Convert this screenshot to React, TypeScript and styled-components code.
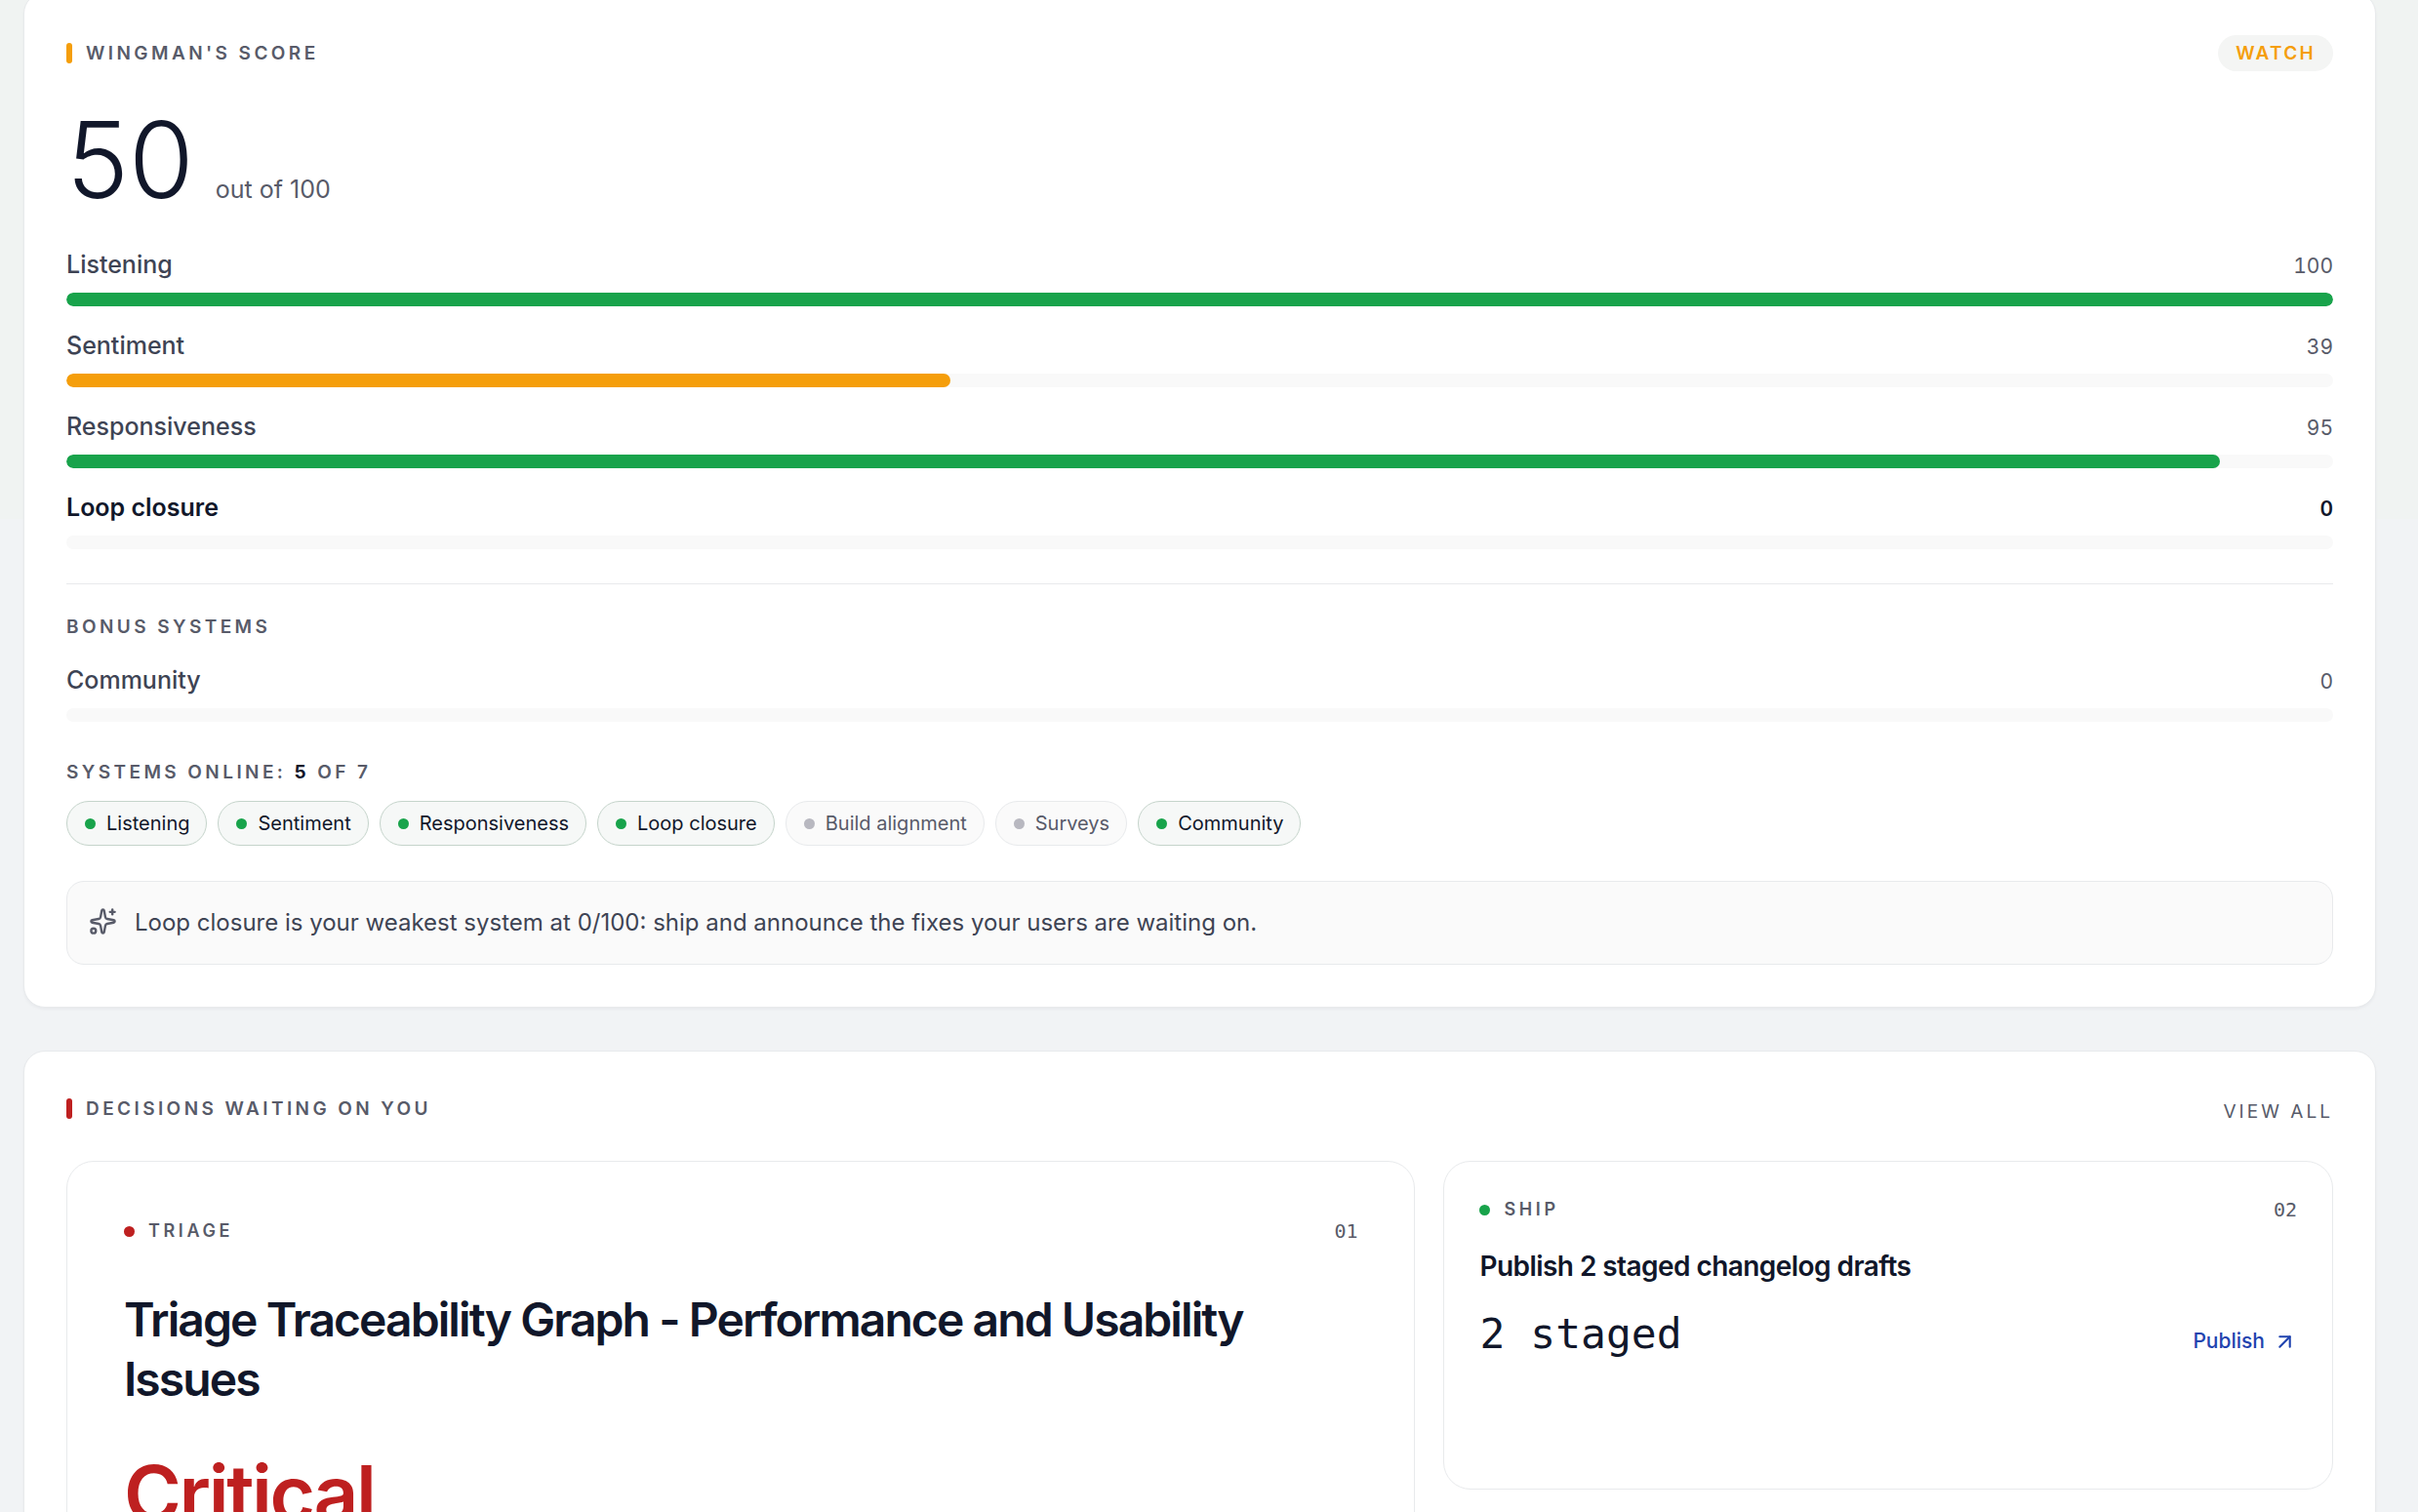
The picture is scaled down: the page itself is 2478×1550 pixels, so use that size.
import React from "react";
import styled, { createGlobalStyle } from "styled-components";
import { ArrowUpRight, Sparkles } from "lucide-react";

const color = {
  ink: "#11172a",
  body: "#3e4454",
  muted: "#585b69",
  line: "#e8eaec",
  good: "#18a34b",
  warn: "#f59e0b",
  bad: "#be2020",
  link: "#1f43af",
  off: "#b8b8c0",
};

const sans = `Inter, "Liberation Sans", sans-serif`;
const mono = `"DejaVu Sans Mono", "Liberation Mono", monospace`;

const GlobalStyle = createGlobalStyle`
  *, *::before, *::after { box-sizing: border-box; }
  body {
    margin: 0;
    background: #f1f3f5;
    font-family: ${sans};
    color: ${color.ink};
    -webkit-font-smoothing: antialiased;
  }
  h1, h2, h3, p, ul { margin: 0; padding: 0; }
`;

const Page = styled.main`
  display: flex;
  flex-direction: column;
  gap: 44px;
  height: 100vh;
  overflow: hidden;
  padding: 0 43px 0 24px;
  background: linear-gradient(#f0f3f2 0 532px, #f1f3f5 532px);
`;

const Card = styled.section<{ $scrolled?: boolean }>`
  flex: none;
  margin-top: ${(p) => (p.$scrolled ? "-8px" : "0")};
  padding: 43px;
  background: #fff;
  border: 1px solid ${color.line};
  border-radius: 22px;
  box-shadow: 0 2px 3px rgba(17, 23, 42, 0.04);
`;

const CardHeader = styled.header<{ $align: string }>`
  display: flex;
  justify-content: space-between;
  align-items: ${(p) => p.$align};
`;

const CardTitle = styled.h2<{ $accent: string }>`
  display: flex;
  align-items: center;
  gap: 14px;
  font-size: 19px;
  line-height: 31px;
  font-weight: 600;
  letter-spacing: 0.18em;
  text-transform: uppercase;
  color: ${color.muted};

  &::before {
    content: "";
    width: 6px;
    height: 21px;
    border-radius: 3px;
    background: ${(p) => p.$accent};
  }
`;

const Status = styled.span`
  padding: 0 18px;
  border-radius: 19px;
  background: #f4f5f4;
  color: ${color.warn};
  font-size: 19px;
  line-height: 37px;
  font-weight: 600;
  letter-spacing: 0.12em;
`;

const Score = styled.p`
  display: flex;
  align-items: baseline;
  gap: 22px;
  margin: 37px 0 35px;
  font-size: 25px;
  line-height: 36px;
  color: ${color.muted};
`;

const ScoreValue = styled.strong`
  font-size: 108px;
  line-height: 108px;
  font-weight: 300;
  color: ${color.ink};
`;

const Meters = styled.div`
  display: flex;
  flex-direction: column;
  gap: 22px;
`;

const MeterRow = styled.div<{ $strong?: boolean }>`
  display: grid;
  grid-template-columns: 1fr auto;
  align-items: baseline;
  row-gap: 11px;
  font-size: 25px;
  line-height: 36px;
  font-weight: ${(p) => (p.$strong ? 600 : 500)};
  color: ${(p) => (p.$strong ? color.ink : color.body)};
`;

const MeterValue = styled.span<{ $strong?: boolean }>`
  font-size: 21px;
  line-height: 30px;
  font-weight: ${(p) => (p.$strong ? 600 : 400)};
  font-variant-numeric: tabular-nums;
  color: ${(p) => (p.$strong ? color.ink : color.muted)};
`;

const Track = styled.div`
  grid-column: 1 / -1;
  height: 14px;
  border-radius: 7px;
  background: #f9f9f9;
  overflow: hidden;
`;

const Fill = styled.div<{ $tone: string }>`
  height: 100%;
  border-radius: 7px;
  background: ${(p) => p.$tone};
`;

const Divider = styled.hr`
  margin: 35px 0 30px;
  border: 0;
  border-top: 1px solid ${color.line};
`;

const Overline = styled.h3<{ $top?: number; $bottom: number }>`
  margin-top: ${(p) => p.$top ?? 0}px;
  margin-bottom: ${(p) => p.$bottom}px;
  font-size: 19px;
  line-height: 28px;
  font-weight: 600;
  letter-spacing: 0.18em;
  text-transform: uppercase;
  color: ${color.muted};

  b {
    font-weight: 700;
    color: ${color.ink};
  }
`;

const Chips = styled.ul`
  display: flex;
  flex-wrap: wrap;
  gap: 11px;
  list-style: none;
`;

const Dot = styled.span<{ $tone: string }>`
  flex: none;
  width: 11px;
  height: 11px;
  border-radius: 50%;
  background: ${(p) => p.$tone};
`;

const Chip = styled.li<{ $online: boolean }>`
  display: flex;
  align-items: center;
  gap: 11px;
  padding: 0 17px 0 18px;
  border: 1px solid ${(p) => (p.$online ? "#c5d4cb" : color.line)};
  border-radius: 23px;
  background: ${(p) => (p.$online ? "#f6f8f7" : "#fafafa")};
  font-size: 20px;
  line-height: 44px;
  color: ${(p) => (p.$online ? color.ink : color.muted)};
`;

const Insight = styled.p`
  display: flex;
  align-items: center;
  gap: 18px;
  margin-top: 36px;
  padding: 22px;
  border: 1px solid ${color.line};
  border-radius: 18px;
  background: #fafafa;
  font-size: 24px;
  line-height: 40px;
  color: ${color.body};

  svg {
    flex: none;
    margin-bottom: 4px;
    color: ${color.muted};
  }
`;

const ViewAll = styled.a`
  font-size: 19px;
  line-height: 38px;
  letter-spacing: 0.16em;
  text-transform: uppercase;
  text-decoration: none;
  color: ${color.muted};
`;

const Decisions = styled.div`
  display: grid;
  grid-template-columns: 91fr 60fr;
  align-items: start;
  gap: 29px;
  margin-top: 31px;
`;

const Decision = styled.article<{ $lead?: boolean }>`
  min-height: ${(p) => (p.$lead ? 600 : 337)}px;
  padding: ${(p) => (p.$lead ? 58 : 36)}px;
  border: 1px solid ${color.line};
  border-radius: 28px;
`;

const DecisionHeader = styled.header`
  display: flex;
  align-items: center;
  gap: 14px;
  font-size: 18px;
  line-height: 26px;
  font-weight: 600;
  letter-spacing: 0.2em;
  text-transform: uppercase;
  color: ${color.muted};
`;

const Index = styled.span`
  margin-left: auto;
  font-family: ${mono};
  font-size: 20px;
  font-weight: 400;
  letter-spacing: 0;
`;

const LeadTitle = styled.h3`
  margin-top: 47px;
  font-size: 48px;
  line-height: 61px;
  font-weight: 600;
  letter-spacing: -0.04em;
`;

const Severity = styled.p`
  margin-top: 47px;
  font-size: 80px;
  line-height: 80px;
  font-weight: 600;
  letter-spacing: -0.03em;
  color: ${color.bad};
`;

const SideTitle = styled.h3`
  margin-top: 26px;
  font-size: 28px;
  line-height: 38px;
  font-weight: 600;
  letter-spacing: -0.02em;
`;

const SideFooter = styled.div`
  display: flex;
  align-items: baseline;
  justify-content: space-between;
  margin-top: 21px;
`;

const Metric = styled.span`
  font-family: ${mono};
  font-size: 43px;
  line-height: 58px;
  color: ${color.ink};
`;

const Action = styled.a`
  display: flex;
  align-items: center;
  gap: 8px;
  font-size: 21px;
  line-height: 32px;
  font-weight: 500;
  text-decoration: none;
  color: ${color.link};
`;

type MeterProps = { label: string; value: number; tone?: string; strong?: boolean };

const Meter = ({ label, value, tone = color.good, strong }: MeterProps) => (
  <MeterRow $strong={strong}>
    <span>{label}</span>
    <MeterValue $strong={strong}>{value}</MeterValue>
    <Track role="meter" aria-label={label} aria-valuemin={0} aria-valuemax={100} aria-valuenow={value}>
      <Fill $tone={tone} style={{ width: `${value}%` }} />
    </Track>
  </MeterRow>
);

const systems = [
  { name: "Listening", online: true },
  { name: "Sentiment", online: true },
  { name: "Responsiveness", online: true },
  { name: "Loop closure", online: true },
  { name: "Build alignment", online: false },
  { name: "Surveys", online: false },
  { name: "Community", online: true },
];

export default function App() {
  return (
    <>
      <GlobalStyle />
      <Page>
        <Card $scrolled>
          <CardHeader $align="center">
            <CardTitle $accent={color.warn}>Wingman's score</CardTitle>
            <Status>WATCH</Status>
          </CardHeader>
          <Score>
            <ScoreValue>50</ScoreValue>
            <span>out of 100</span>
          </Score>
          <Meters>
            <Meter label="Listening" value={100} />
            <Meter label="Sentiment" value={39} tone={color.warn} />
            <Meter label="Responsiveness" value={95} />
            <Meter label="Loop closure" value={0} strong />
          </Meters>
          <Divider />
          <Overline $bottom={22}>Bonus systems</Overline>
          <Meter label="Community" value={0} />
          <Overline $top={38} $bottom={15}>
            Systems online: <b>5</b> of 7
          </Overline>
          <Chips>
            {systems.map((s) => (
              <Chip key={s.name} $online={s.online}>
                <Dot $tone={s.online ? color.good : color.off} />
                {s.name}
              </Chip>
            ))}
          </Chips>
          <Insight>
            <Sparkles size={29} strokeWidth={2} aria-hidden />
            Loop closure is your weakest system at 0/100: ship and announce the fixes your users are waiting on.
          </Insight>
        </Card>

        <Card>
          <CardHeader $align="flex-start">
            <CardTitle $accent={color.bad}>Decisions waiting on you</CardTitle>
            <ViewAll href="#decisions">View all</ViewAll>
          </CardHeader>
          <Decisions>
            <Decision $lead>
              <DecisionHeader>
                <Dot $tone={color.bad} />
                Triage
                <Index>01</Index>
              </DecisionHeader>
              <LeadTitle>Triage Traceability Graph - Performance and Usability Issues</LeadTitle>
              <Severity>Critical</Severity>
            </Decision>
            <Decision>
              <DecisionHeader>
                <Dot $tone={color.good} />
                Ship
                <Index>02</Index>
              </DecisionHeader>
              <SideTitle>Publish 2 staged changelog drafts</SideTitle>
              <SideFooter>
                <Metric>2 staged</Metric>
                <Action href="#publish">
                  Publish
                  <ArrowUpRight size={25} strokeWidth={2} aria-hidden />
                </Action>
              </SideFooter>
            </Decision>
          </Decisions>
        </Card>
      </Page>
    </>
  );
}
